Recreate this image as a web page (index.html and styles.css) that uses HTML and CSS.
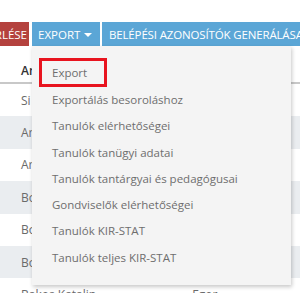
FILE: index.html
```html
<!DOCTYPE html>
<html>
<head>
<meta charset="utf-8">
<link rel="stylesheet" href="styles.css">
</head>
<body>
<div class="page">
  <div class="toolbar">
    <span class="btn btn-red">RLÉSE</span>
    <span class="btn btn-blue btn-export">EXPORT <span class="caret"></span></span>
    <span class="btn btn-blue btn-wide">BELÉPÉSI AZONOSÍTÓK GENERÁLÁSA</span>
  </div>
  <div class="table">
    <div class="row head"><span class="c1">An</span></div>
    <div class="row"><span class="c1">Si</span></div>
    <div class="row alt"><span class="c1">Ar</span></div>
    <div class="row"><span class="c1">Ar</span></div>
    <div class="row alt"><span class="c1">Bo</span></div>
    <div class="row"><span class="c1">Bo</span></div>
    <div class="row alt"><span class="c1">Bo</span></div>
    <div class="row"><span class="c1">Bakos Katalin</span><span class="c2">Egor</span></div>
  </div>
  <div class="dropdown">
    <div class="item first"><span class="focus">Export</span></div>
    <div class="item">Exportálás besoroláshoz</div>
    <div class="item">Tanulók elérhetőségei</div>
    <div class="item">Tanulók tanügyi adatai</div>
    <div class="item">Tanulók tantárgyai és pedagógusai</div>
    <div class="item">Gondviselők elérhetőségei</div>
    <div class="item">Tanulók KIR-STAT</div>
    <div class="item">Tanulók teljes KIR-STAT</div>
  </div>
</div>
</body>
</html>
```
FILE: styles.css
```css
html, body {
  margin: 0;
  padding: 0;
  background: #fff;
  overflow: hidden;
}
body {
  font-family: "Open Sans", "Liberation Sans", sans-serif;
  width: 300px;
  height: 293px;
}
.page {
  position: relative;
  padding-top: 22px;
}
.toolbar {
  display: flex;
  height: 24px;
  white-space: nowrap;
  overflow: hidden;
}
.btn {
  display: flex;
  align-items: center;
  color: #fff;
  font-size: 11.5px;
  height: 24px;
  flex: none;
}
.btn-red {
  background: #b4423e;
  width: 29px;
  margin-right: 3px;
  justify-content: flex-end;
  padding-right: 2px;
  box-sizing: border-box;
  overflow: hidden;
}
.btn-blue {
  background: #5ba6d6;
}
.btn-export {
  width: 68px;
  padding-left: 6px;
  box-sizing: border-box;
  margin-right: 2px;
}
.caret {
  display: inline-block;
  width: 0;
  height: 0;
  border-left: 4px solid transparent;
  border-right: 4px solid transparent;
  border-top: 4px solid #fff;
  margin-left: 4px;
  margin-top: 2px;
}
.btn-wide {
  padding-left: 7px;
  width: 220px;
  letter-spacing: -0.15px;
}
.table {
  margin-top: 8px;
}
.row {
  height: 32.4px;
  display: flex;
  align-items: center;
  font-size: 12px;
  color: #6a6a6a;
  padding-left: 21px;
}
.row.head {
  color: #333;
  font-weight: 600;
  border-bottom: 2px solid #c8c8c8;
  box-sizing: border-box;
  height: 30px;
  padding-top: 4px;
}
.row.alt {
  background: #eaedf0;
}
.c2 {
  margin-left: 96px;
}
.dropdown {
  position: absolute;
  left: 32px;
  top: 46px;
  width: 259px;
  height: 239px;
  box-sizing: border-box;
  background: #f4f4f4;
  box-shadow: 1px 2px 4px rgba(0, 0, 0, 0.22);
  padding-top: 12px;
}
.item {
  height: 26.3px;
  line-height: 26px;
  padding-left: 20px;
  font-size: 11.5px;
  color: #6e6e6e;
  white-space: nowrap;
}
.item.first {
  height: 29px;
  padding-left: 7px;
  line-height: normal;
}
.focus {
  display: inline-flex;
  align-items: center;
  box-sizing: border-box;
  width: 68px;
  height: 29px;
  border: 3px solid #e8141f;
  padding-left: 10px;
}
```
